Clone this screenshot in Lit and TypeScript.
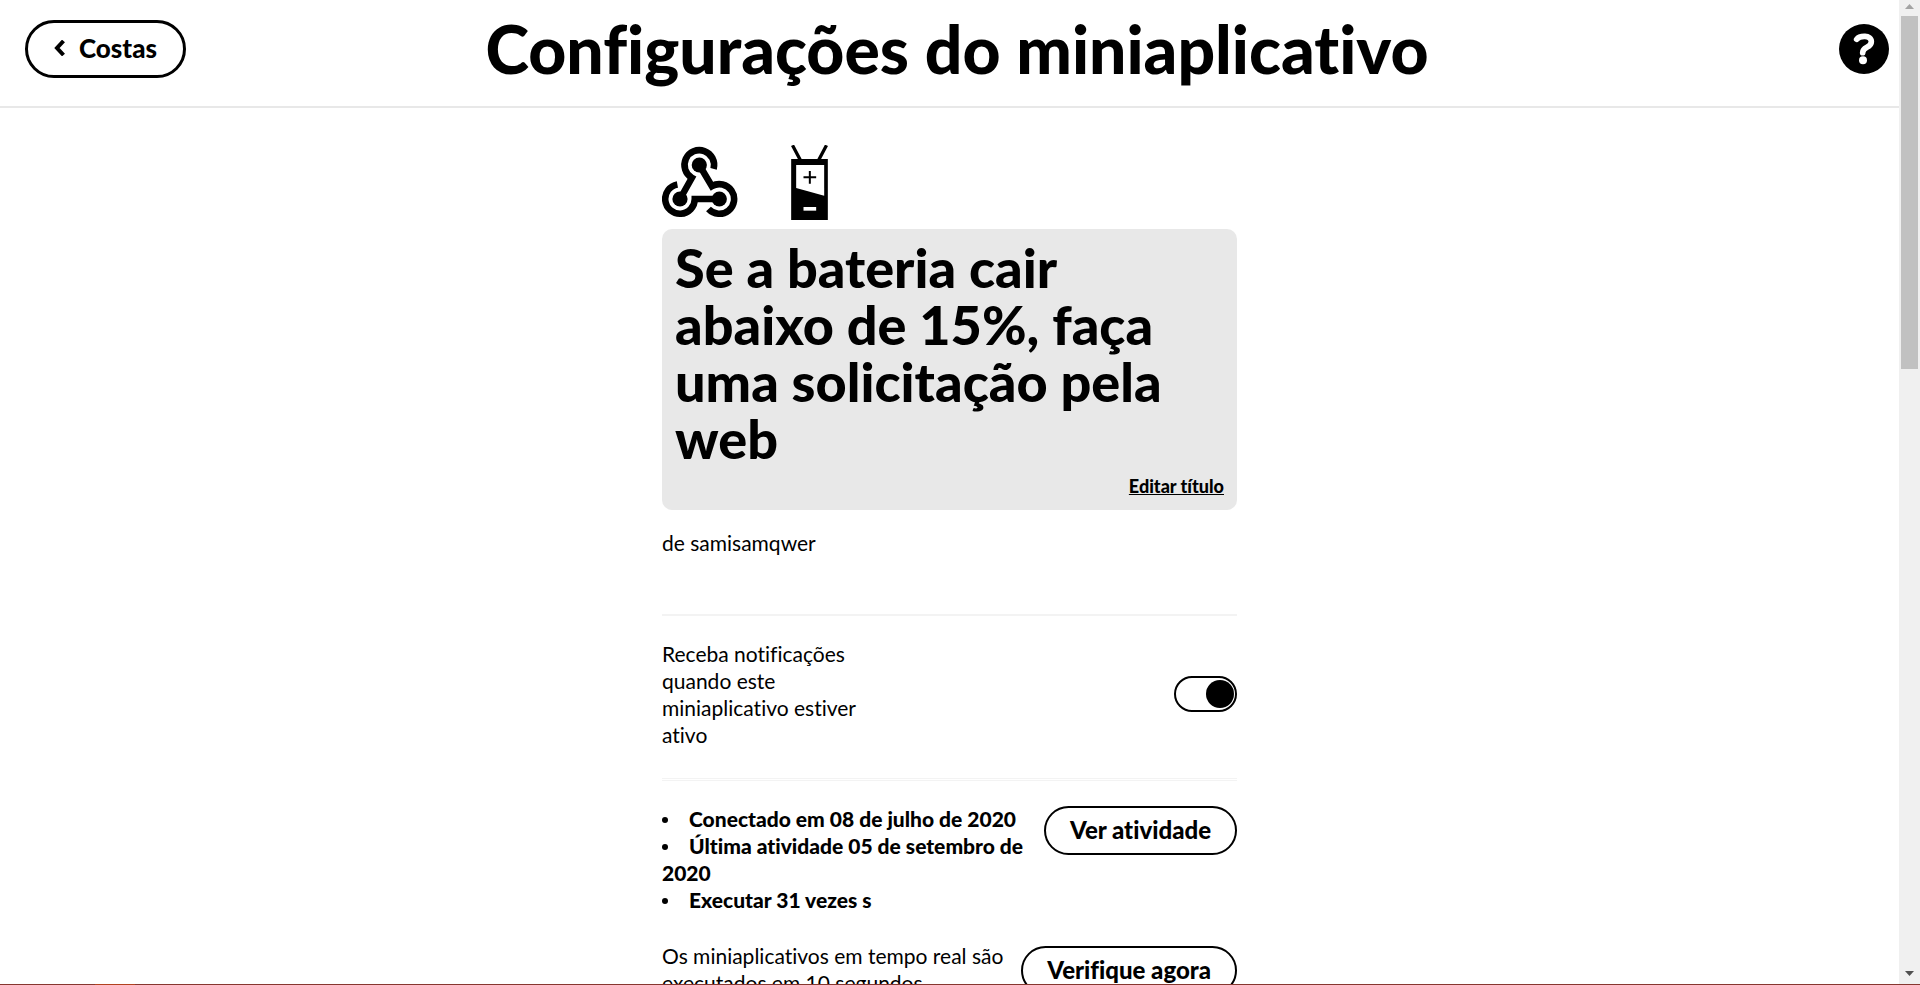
import { LitElement, html, css } from "lit";
import { customElement, state } from "lit/decorators.js";

@customElement("app-root")
export class AppRoot extends LitElement {
  static styles = css`
    :host {
      display: grid;
      grid-template-columns: minmax(0, 1fr) 21px;
      grid-template-rows: minmax(0, 1fr) 1px;
      height: 100vh;
      overflow: hidden;
      background: #fff;
      color: #000;
      font-family: Lato, "Open Sans", sans-serif;
      font-size: 21px;
      line-height: 27px;
      font-variant-ligatures: none;
    }
    * {
      box-sizing: border-box;
    }
    svg {
      display: block;
    }
    .page {
      overflow: hidden;
    }
    header {
      display: flex;
      align-items: flex-start;
      justify-content: space-between;
      padding: 20px 10px 0 25px;
      height: 108px;
      border-bottom: 2px solid #e8e8e8;
    }
    .side {
      flex: 1 1 0;
      display: flex;
    }
    .side.end {
      justify-content: flex-end;
      padding-top: 4px;
    }
    h1 {
      margin: 0;
      font-size: 66px;
      line-height: 58px;
      font-weight: 900;
    }
    .pill {
      font: inherit;
      font-variant-ligatures: none;
      font-weight: 900;
      font-size: 24px;
      line-height: 29px;
      color: #000;
      background: #fff;
      border: 2px solid #000;
      border-radius: 30px;
      padding: 7px 24px 9px;
      white-space: nowrap;
      cursor: pointer;
    }
    .back {
      display: flex;
      align-items: center;
      gap: 14px;
      height: 58px;
      padding: 0 26px 2px;
      border-width: 3px;
      font-size: 26px;
    }
    .help {
      padding: 0;
      border: 0;
      background: none;
      cursor: pointer;
    }
    main {
      width: 575px;
      max-width: 100%;
      margin: 0 auto;
      padding-top: 37px;
    }
    .services {
      display: flex;
      gap: 53px;
      margin-bottom: 9px;
    }
    .card {
      display: flex;
      flex-direction: column;
      gap: 6px;
      padding: 10px 13px;
      background: #e8e8e8;
      border-radius: 10px;
    }
    h2 {
      margin: 0;
      max-width: 530px;
      font-size: 54px;
      line-height: 57px;
      font-weight: 900;
    }
    .edit {
      align-self: flex-end;
      color: #000;
      font-size: 18px;
      font-weight: 900;
    }
    .author {
      margin: 19px 0 58px;
    }
    .notify {
      display: flex;
      align-items: center;
      justify-content: space-between;
      padding: 24px 0 30px;
      border-top: 2px solid #f3f3f3;
    }
    .notify label {
      width: 200px;
    }
    .switch {
      appearance: none;
      display: flex;
      align-items: center;
      width: 63px;
      height: 36px;
      margin: 0;
      padding: 0 1px;
      border: 2px solid #000;
      border-radius: 18px;
      background: #fff;
      cursor: pointer;
    }
    .switch::before {
      content: "";
      width: 28px;
      height: 28px;
      border-radius: 50%;
      background: #000;
    }
    .switch:checked {
      justify-content: flex-end;
    }
    .row {
      display: flex;
      align-items: flex-start;
      justify-content: space-between;
    }
    .row p {
      margin: 0;
      width: 350px;
    }
    .row .pill {
      margin-top: 1px;
    }
    .check .pill {
      margin-top: 4px;
    }
    .activity {
      padding-top: 24px;
      margin-bottom: 29px;
      border-top: 3px double #f3f3f3;
    }
    ul {
      margin: 0;
      padding: 0;
      width: 375px;
      list-style: none;
      font-weight: 900;
    }
    li::before {
      content: "";
      display: inline-block;
      width: 6px;
      height: 6px;
      margin-right: 21px;
      border-radius: 50%;
      background: #000;
      vertical-align: 4px;
    }
    .scroll {
      display: flex;
      flex-direction: column;
      align-items: center;
      justify-content: space-between;
      padding: 4px 0 8px;
      background: #f0f0f0;
    }
    .bar {
      flex: 1;
      padding-top: 7px;
    }
    .thumb {
      width: 17px;
      height: 37%;
      background: #c1c1c1;
    }
    .strip {
      grid-column: 1 / -1;
      background: linear-gradient(90deg, #86372f 95px, #b2421f 95px 135px, #86372f 135px);
    }
  `;

  @state() private notify = true;

  render() {
    return html`
      <div class="page">
        <header>
          <div class="side">
            <button class="pill back">
              <svg width="11" height="16" viewBox="0 0 11 16" fill="none" stroke="#000" stroke-width="4">
                <path d="M9.5 1 3 8l6.500 7" />
              </svg>
              Costas
            </button>
          </div>
          <h1>Configurações do miniaplicativo</h1>
          <div class="side end">
            <button class="help" aria-label="Ajuda">
              <svg width="50" height="50" viewBox="0 0 150 150">
                <circle cx="75" cy="75" r="75" />
                <path
                  d="M53 46C61 35 97 31 97 53c0 20-26 14-26 33"
                  fill="none"
                  stroke="#fff"
                  stroke-width="17"
                  stroke-linecap="round"
                />
                <circle cx="72" cy="109" r="12" fill="#fff" />
              </svg>
            </button>
          </div>
        </header>
        <main>
          <div class="services">
            <svg width="76" height="75" viewBox="0 0 76 75" fill="none" stroke="#000" stroke-width="6.6">
              <path d="M51.6 23.8A14.8 14.8 0 1 0 29.9 32.8L18 54" />
              <path d="M15.4 39.4A14.8 14.8 0 1 0 32.8 54H57.3" />
              <path d="M46.5 64.1A14.8 14.8 0 1 0 49.9 41.2L37.3 20" />
              <g fill="#000" stroke="none">
                <circle cx="37.3" cy="20" r="7.6" />
                <circle cx="18" cy="54" r="7.6" />
                <circle cx="57.3" cy="54" r="7.6" />
              </g>
            </svg>
            <svg width="37" height="75" viewBox="423 45 110 225">
              <path d="M427 46l23 43M529 46l-23 43" stroke="#000" stroke-width="10" />
              <path d="M423 87h110v183H423z" />
              <path d="M438 105h84v92l-84-23z" fill="#fff" />
              <path d="M460 142h38M479 123v38" stroke="#000" stroke-width="6" />
              <path d="M460 231h38v11h-38z" fill="#fff" />
            </svg>
          </div>
          <section class="card">
            <h2>Se a bateria cair abaixo de 15%, faça uma solicitação pela web</h2>
            <a class="edit" href="#">Editar título</a>
          </section>
          <p class="author">de samisamqwer</p>
          <div class="notify">
            <label for="notify">Receba notificações quando este miniaplicativo estiver ativo</label>
            <input
              id="notify"
              class="switch"
              type="checkbox"
              role="switch"
              .checked=${this.notify}
              @change=${(e: Event) => (this.notify = (e.target as HTMLInputElement).checked)}
            />
          </div>
          <div class="row activity">
            <ul>
              <li>Conectado em 08 de julho de 2020</li>
              <li>Última atividade 05 de setembro de 2020</li>
              <li>Executar 31 vezes s</li>
            </ul>
            <button class="pill">Ver atividade</button>
          </div>
          <div class="row check">
            <p>Os miniaplicativos em tempo real são executados em 10 segundos</p>
            <button class="pill">Verifique agora</button>
          </div>
        </main>
      </div>
      <div class="scroll" aria-hidden="true">
        <svg width="9" height="5" viewBox="0 0 9 5"><path d="M0 5 4.500 0 9 5z" fill="#a3a3a3" /></svg>
        <div class="bar"><div class="thumb"></div></div>
        <svg width="9" height="5" viewBox="0 0 9 5"><path d="M0 0h9L4.500 5z" fill="#505050" /></svg>
      </div>
      <div class="strip"></div>
    `;
  }
}
